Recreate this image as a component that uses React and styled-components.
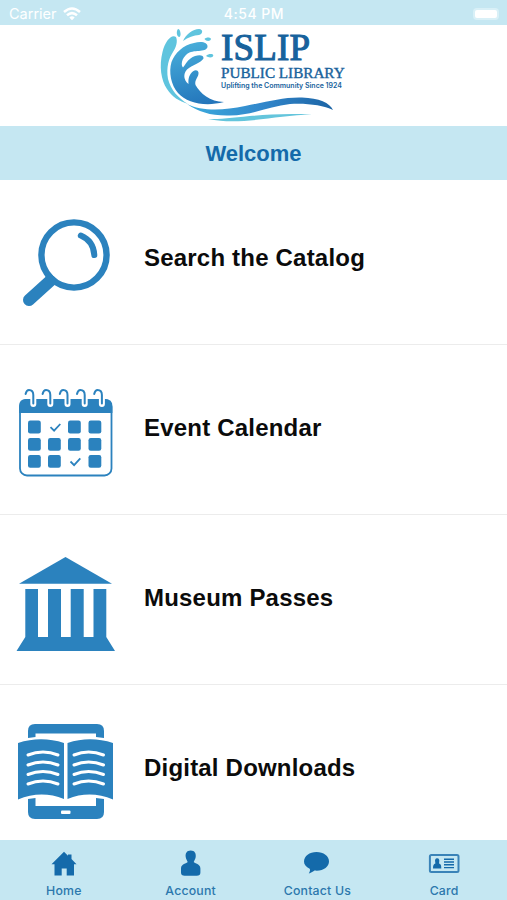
import React from 'react'
import styled, { createGlobalStyle } from 'styled-components'

const BLUE = '#2b82be'
const NAVY = '#146aaa'

const SearchIcon = () => (
  <RowIcon viewBox="0 198 130 120">
    <circle cx="74" cy="255" r="32.6" fill="none" stroke={BLUE} strokeWidth="6.4" />
    <path d="M80.8 235.6 Q93.5 241 94.3 255" fill="none" stroke={BLUE} strokeWidth="6" strokeLinecap="round" />
    <path d="M50 281 L29 300" stroke={BLUE} strokeWidth="12" strokeLinecap="round" />
    <path d="M45 276 L50 273 L56 279 L53 284Z" fill={BLUE} />
  </RowIcon>
)

const CalendarIcon = () => {
  const rings = [29, 46, 63.2, 80.4, 97.6]
  const cols = [28, 48, 68, 88.5]
  const lines = [420.6, 438, 455]
  const checks = ['1-0', '2-2']

  return (
    <RowIcon viewBox="0 368 130 120">
      <rect x="20" y="400" width="91.5" height="75.5" rx="7" fill="#fff" stroke={BLUE} strokeWidth="1.8" />
      <path d="M19.1 413 V406 Q19.1 399 26 399 H105 Q112.4 399 112.4 406 V413Z" fill={BLUE} />
      {rings.map((x) => (
        <g key={x} fill="none" strokeLinecap="round">
          <path d={`M${x + 4.3} 397 V404`} stroke="#fff" strokeWidth="6" />
          <path d={`M${x - 3.4} 394 Q${x - 2.5} 390 ${x} 390 Q${x + 4.3} 390 ${x + 4.3} 395 V403.5`} stroke={BLUE} strokeWidth="2" />
        </g>
      ))}
      {lines.map((y, row) =>
        cols.map((x, col) =>
          checks.includes(`${col}-${row}`) ? (
            <path key={x} d={`M${x + 2.5} ${y + 6.5} l3.6 3.6 l6.2 -6.7`} fill="none" stroke={BLUE} strokeWidth="1.8" />
          ) : (
            <rect key={x} x={x} y={y} width="12.8" height="12.8" rx="2.2" fill={BLUE} />
          )
        )
      )}
    </RowIcon>
  )
}

const MuseumIcon = () => (
  <RowIcon viewBox="0 538 130 120">
    <path d="M65.5 557 L112 583.8 H19Z" fill={BLUE} />
    <path d="M25.3 589 H38 V637 H48 V589 H61 V637 H70.7 V589 H83.7 V637 H93.5 V589 H106.3 V637 L115 651 H16.5 L25.3 637Z" fill={BLUE} />
  </RowIcon>
)

const EbookIcon = () => (
  <RowIcon viewBox="0 708 130 120">
    <path d="M28 738 V731 Q28 724 35 724 H97 Q104 724 104 731 V738 L96 737 V733.5 H35.5 V737Z" fill={BLUE} />
    <path d="M28 799 L35.5 798 V806 H96 V798 L104 799 V812 Q104 819 97 819 H35 Q28 819 28 812Z" fill={BLUE} />
    <rect x="61" y="810.5" width="9.5" height="3.6" rx="1" fill="#fff" />
    <path d="M18 743 Q41 735.5 64 743 V799 Q41 790 18 799.5Z" fill={BLUE} />
    <path d="M67.5 743 Q90 735.5 113 743 V799.5 Q90 790 67.5 799Z" fill={BLUE} />
    {[755, 765, 774.5, 784].map((y) => (
      <path
        key={y}
        d={`M28 ${y} Q43 ${y - 6} 58 ${y} M74 ${y} Q88.5 ${y - 6} 103.5 ${y}`}
        fill="none"
        stroke="#fff"
        strokeWidth="3"
        strokeLinecap="round"
      />
    ))}
  </RowIcon>
)

const WifiIcon = () => (
  <svg width="18" height="14" viewBox="0 0 18 14" fill="none" stroke="#fff" strokeWidth="2.5">
    <path d="M1 5 Q9 -2 17 5" />
    <path d="M4 8.3 Q9 4 14 8.3" />
    <path d="M6.3 10.5 Q9 8.2 11.7 10.5 L9 13.3Z" fill="#fff" stroke="none" />
  </svg>
)

// wave drawing of the library logo
const Wave = () => (
  <WaveArt viewBox="150 26 190 98">
    <defs>
      <linearGradient id="crest" x1="0.4" y1="0" x2="0.6" y2="1">
        <stop offset="0" stopColor="#48add9" />
        <stop offset="0.5" stopColor="#3591cb" />
        <stop offset="1" stopColor="#2476bb" />
      </linearGradient>
      <linearGradient id="swell" x1="0" y1="0" x2="1" y2="0">
        <stop offset="0" stopColor="#3cacdd" />
        <stop offset="0.5" stopColor="#3288cc" />
        <stop offset="1" stopColor="#1c64a5" />
      </linearGradient>
    </defs>
    <g fill="#5fc4de">
      <path d="M176 37 C171 34 165 42 162.500 52 C159 66 161 80 167 89 C172 97 179 101 188 104 C178 98 171 90 168 79 C166 67 169 58 173 52 C176 48 178 41 176 37Z" />
      <path d="M178 29 C180.500 29 181.500 36 179.500 37 C176.500 37 176 31 178 29Z" />
      <path d="M183 41 C186 34 193 29 199 29 C203.500 29.500 203 34 199 35 C194 35.500 188 37 183 41Z" />
      <path d="M204.500 39 C206 37 210.500 37 211 39 C210.500 41.500 206 41.500 204.500 39Z" />
      <path d="M206 56 C208.500 53.500 213 53.500 213.300 55.500 C213 58 208.500 58 206 56Z" />
    </g>
    <path
      d="M207.500 47 C208 42 201 41 194 43 C183 45 175 53 171.500 62 C168.500 72 171 85 178 93 C187 103 205 107 224 102 C210 102 200 93 195.500 85 C194 80 199 77 198.500 72.500 C197.500 68.500 193 70 190.500 74 C188 78 188.500 81 188.500 84 C183.500 80 183 74 187 69.500 C192 65 201 63 203.500 58.500 C204 54 196 54.500 190.500 58.500 C187 61 185 65 183 67.500 C180.500 65 182 58 187 54 C193 49 206 53 207.500 47Z"
      fill="url(#crest)"
    />
    <path d="M187 104 C201 111 222 111 245 106 C267 102 282 97 302 97.500 C319 98 330 103 333 110 C323 105 306 103 290 104 C270 106 253 115 230 115.500 C211 116 199 112 187 104Z" fill="url(#swell)" />
    <path d="M208 119 C232 120 260 112 312 114.500 C275 115 242 126 208 119Z" fill="#64c5dc" />
  </WaveArt>
)

const HomeIcon = () => (
  <TabIcon viewBox="-1 0 32 28">
    <path d="M16 1.7 L20 5.7 V4.5 H23.5 V9 L28.5 14.3 H26 V25.5 H18.7 V18.5 H13.7 V25.5 H6.5 V14.3 H3.5Z" />
  </TabIcon>
)

const AccountIcon = () => (
  <TabIcon viewBox="-0.7 0 32 28">
    <path d="M16 0.6 C20 0.6 21.5 3.5 21 7 C20.7 9.3 19.5 10.5 19 12 C20 13.8 25.7 13.5 25.7 18.5 V22.5 Q25.7 25.7 22 25.7 H10 Q6.3 25.7 6.3 22.5 V18.5 C6.3 13.5 12 13.8 13 12 C12.5 10.5 11.3 9.3 11 7 C10.5 3.5 12 0.6 16 0.6Z" />
  </TabIcon>
)

const ContactIcon = () => (
  <TabIcon viewBox="0 0 32 28">
    <path d="M15.5 2 C22.5 2 28 6 28 11.5 C28 17 22 21.5 13.5 20.6 C11.5 22 9.8 23 7.8 23.4 C9 21.5 9.4 20 8.7 18.8 C5 17 3 14.5 3 11.5 C3 6 8.5 2 15.5 2Z" />
  </TabIcon>
)

const CardIcon = () => (
  <TabIcon viewBox="0 0 32 28">
    <rect x="1.9" y="4.9" width="28.6" height="17.2" rx="1.5" fill="none" stroke="#3a83b8" strokeWidth="2" />
    <path d="M9.1 8.2 C11.2 8.2 11.6 10 11.2 12 L11 13.5 C12.8 14 13.3 15 13.3 18.5 H5 C5 15 5.7 14 7.4 13.5 L7.2 12 C6.7 10 7.2 8.2 9.1 8.2Z" />
    <path d="M16 9.2 H26 M16 12 H26 M16 14.8 H26 M16 17.6 H26" stroke={NAVY} strokeWidth="1.4" />
  </TabIcon>
)

const menu = [
  { title: 'Search the Catalog', Icon: SearchIcon },
  { title: 'Event Calendar', Icon: CalendarIcon },
  { title: 'Museum Passes', Icon: MuseumIcon },
  { title: 'Digital Downloads', Icon: EbookIcon },
]

const tabs = [
  { label: 'Home', Icon: HomeIcon },
  { label: 'Account', Icon: AccountIcon },
  { label: 'Contact Us', Icon: ContactIcon },
  { label: 'Card', Icon: CardIcon },
]

const App = () => {
  return (
    <Screen>
      <GlobalStyle />
      <StatusBar>
        <Carrier>
          Carrier
          <WifiIcon />
        </Carrier>
        <Clock>4:54 PM</Clock>
        <BatterySlot>
          <Battery />
        </BatterySlot>
      </StatusBar>

      <Header>
        <Wave />
        <LogoText>
          <LogoName>ISLIP</LogoName>
          <LogoSub>PUBLIC LIBRARY</LogoSub>
          <LogoTagline>Uplifting the Community Since 1924</LogoTagline>
        </LogoText>
      </Header>

      <Welcome>Welcome</Welcome>

      <Menu>
        {menu.map(({ title, Icon }, idx) => (
          <Row key={title} $first={idx === 0}>
            <Icon />
            <RowTitle>{title}</RowTitle>
          </Row>
        ))}
      </Menu>

      <TabBar>
        {tabs.map(({ label, Icon }) => (
          <Tab key={label}>
            <Icon />
            <TabLabel>{label}</TabLabel>
          </Tab>
        ))}
      </TabBar>
    </Screen>
  )
}

export default App

const GlobalStyle = createGlobalStyle`
  * {
    box-sizing: border-box;
  }

  body {
    margin: 0;
    background: #fff;
    font-family: "Liberation Sans", Arial, sans-serif;
  }
`

const Screen = styled.div`
  display: flex;
  flex-direction: column;
  width: 507px;
  height: 900px;
  overflow: hidden;
`

const StatusBar = styled.div`
  display: grid;
  grid-template-columns: 1fr auto 1fr;
  align-items: center;
  flex: none;
  height: 25px;
  padding: 2px 8px 0 9px;
  background: #c5e7f2;
  color: #fff;
  font-family: Inter, sans-serif;
  font-size: 14px;
`

const Carrier = styled.div`
  display: flex;
  align-items: center;
  gap: 6px;
  font-size: 14.5px;
`

const Clock = styled.div`
  font-weight: 500;
  letter-spacing: 0.5px;
`

const BatterySlot = styled.div`
  display: flex;
  justify-content: flex-end;
`

const Battery = styled.div`
  width: 26px;
  height: 12px;
  border: 2px solid #d9f0f7;
  border-radius: 4px;
  background: #fff;
`

const Header = styled.header`
  display: flex;
  flex: none;
  height: 101px;
  padding: 1px 0 0 150px;
`

const WaveArt = styled.svg`
  flex: none;
  width: 190px;
  height: 98px;
`

const LogoText = styled.div`
  display: flex;
  flex-direction: column;
  margin-left: -119px;
  padding-top: 5px;
  color: #17629c;
  white-space: nowrap;
`

const LogoName = styled.div`
  font-family: "Liberation Serif", serif;
  font-size: 37px;
  line-height: 34px;
  letter-spacing: 0.2px;
  -webkit-text-stroke: 1.1px #17629c;
`

const LogoSub = styled.div`
  font-family: "Liberation Serif", serif;
  font-size: 15.2px;
  line-height: 16px;
  -webkit-text-stroke: 0.4px #17629c;
`

const LogoTagline = styled.div`
  font-family: Inter, sans-serif;
  font-size: 7px;
  font-weight: 600;
  line-height: 9px;
`

const Welcome = styled.h1`
  display: flex;
  align-items: center;
  justify-content: center;
  flex: none;
  height: 54px;
  margin: 0;
  padding-top: 2px;
  background: #c5e7f2;
  color: #146aaa;
  font-size: 22px;
  font-weight: 700;
`

const Menu = styled.main`
  flex: 1;
  min-height: 0;
  overflow: hidden;
`

const Row = styled.div`
  display: flex;
  align-items: center;
  height: ${({ $first }) => ($first ? '165px' : '170px')};
  padding-bottom: ${({ $first }) => ($first ? '8px' : '3px')};
  border-bottom: 1px solid #ececec;
`

const RowIcon = styled.svg`
  flex: none;
  width: 130px;
  height: 120px;
`

const RowTitle = styled.div`
  padding-left: 14px;
  color: #0b0b0b;
  font-size: 24px;
  font-weight: 700;
  letter-spacing: 0.2px;
`

const TabBar = styled.nav`
  display: grid;
  grid-template-columns: repeat(4, 1fr);
  flex: none;
  height: 60px;
  background: #c5e7f2;
`

const Tab = styled.div`
  display: flex;
  flex-direction: column;
  align-items: center;
  padding-top: 10px;
`

const TabIcon = styled.svg`
  width: 32px;
  height: 28px;
  fill: #146aaa;
`

const TabLabel = styled.div`
  padding: 5px 0 0 1px;
  color: #2c78ad;
  font-family: Inter, sans-serif;
  font-size: 12.3px;
  font-weight: 500;
  line-height: 16px;
  letter-spacing: 0.2px;
`
